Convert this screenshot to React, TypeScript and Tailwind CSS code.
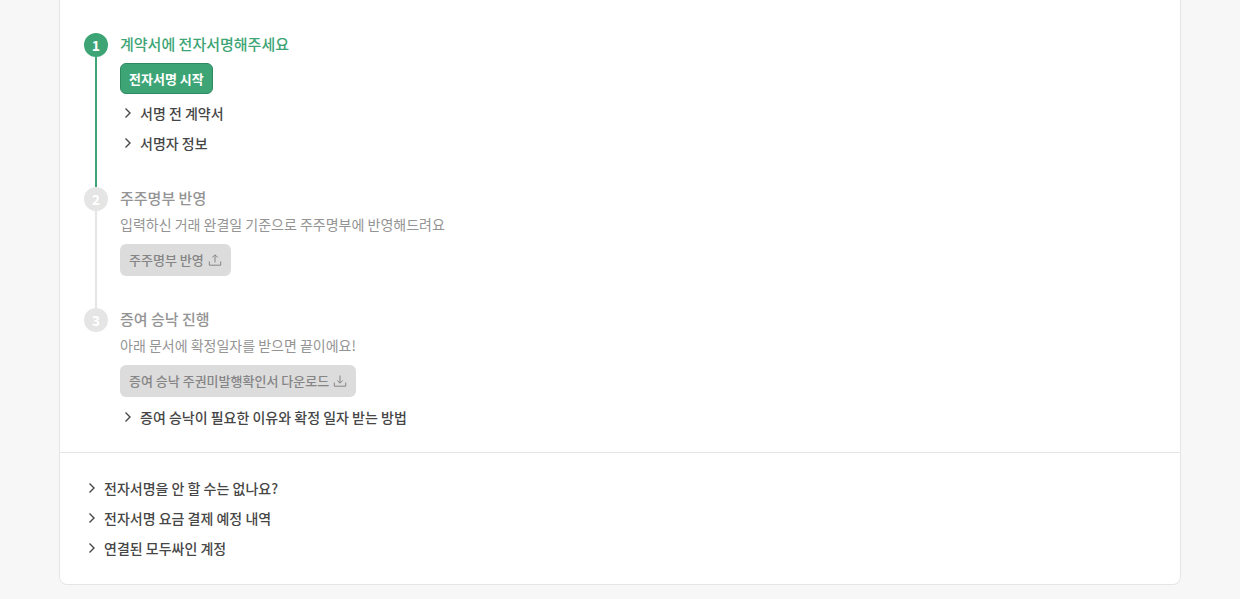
import type { ReactNode } from 'react';

type Status = 'active' | 'pending';

function ChevronIcon() {
  return (
    <svg className="size-4 shrink-0" viewBox="0 0 16 16" fill="none" stroke="currentColor" strokeWidth="1.4" aria-hidden="true">
      <path d="M5.5 3.6 10 8l-4.5 4.4" />
    </svg>
  );
}

function UploadIcon() {
  return (
    <svg className="size-4" viewBox="0 0 16 16" fill="none" stroke="currentColor" aria-hidden="true">
      <path d="M8 10.5V3M5.3 5.5 8 2.8l2.7 2.7M2.3 9.5v3.7h11.4V9.5" />
    </svg>
  );
}

function DownloadIcon() {
  return (
    <svg className="size-4" viewBox="0 0 16 16" fill="none" stroke="currentColor" aria-hidden="true">
      <path d="M8 2.5V10M5.3 7.5 8 10.2l2.7-2.7M2.3 9.5v3.7h11.4V9.5" />
    </svg>
  );
}

function Toggle({ children }: { children: ReactNode }) {
  return (
    <button
      type="button"
      aria-expanded="false"
      className="flex items-center gap-1 text-sm leading-[22px] font-medium text-[#464646] cursor-pointer"
    >
      <ChevronIcon />
      {children}
    </button>
  );
}

function DisabledButton({ children }: { children: ReactNode }) {
  return (
    <button
      type="button"
      disabled
      className="mt-[9px] flex h-8 items-center gap-[3px] rounded-md bg-[#dcdcdc] pr-2 pl-[9px] text-[13px] font-medium text-[#858585]"
    >
      {children}
    </button>
  );
}

interface StepProps {
  number: number;
  title: string;
  description?: string;
  status?: Status;
  last?: boolean;
  children: ReactNode;
}

function Step({ number, title, description, status = 'pending', last = false, children }: StepProps) {
  const active = status === 'active';

  return (
    <li className="flex gap-3">
      <div className="flex flex-col items-center">
        <span
          className={`flex size-6 items-center justify-center rounded-full text-sm leading-6 font-bold text-white ${
            active ? 'bg-[#3da575]' : 'bg-[#e5e5e5]'
          }`}
        >
          {number}
        </span>
        {!last && <span className={`w-0.5 grow ${active ? 'bg-[#3da575]' : 'bg-[#e5e5e5]'}`} />}
      </div>
      <div className={`flex flex-col items-start ${last ? 'pb-6' : 'pb-8'}`}>
        <h2 className={`text-[15px] leading-[22px] font-medium ${active ? 'text-[#3da575]' : 'text-[#949494]'}`}>{title}</h2>
        {description && <p className="mt-[5px] text-sm leading-[21px] text-[#949494]">{description}</p>}
        {children}
      </div>
    </li>
  );
}

export default function App() {
  return (
    <div className="min-h-screen bg-[#f7f7f7] px-[59px] pb-3.5 font-['Noto_Sans_CJK_KR','Noto_Sans',sans-serif]">
      <main className="mx-auto max-w-[1122px] rounded-b-lg border-x border-b border-[#e5e5e5] bg-white">
        <ol className="px-6 pt-[33px]">
          <Step number={1} title="계약서에 전자서명해주세요" status="active">
            <button
              type="button"
              className="mt-2 flex h-[31px] items-center rounded-md border border-[#2f8a60] bg-[#3da575] px-2 text-[13px] font-bold text-white cursor-pointer"
            >
              전자서명 시작
            </button>
            <div className="mt-2 mb-px flex flex-col gap-2">
              <Toggle>서명 전 계약서</Toggle>
              <Toggle>서명자 정보</Toggle>
            </div>
          </Step>

          <Step number={2} title="주주명부 반영" description="입력하신 거래 완결일 기준으로 주주명부에 반영해드려요">
            <DisabledButton>
              주주명부 반영
              <UploadIcon />
            </DisabledButton>
          </Step>

          <Step number={3} title="증여 승낙 진행" description="아래 문서에 확정일자를 받으면 끝이에요!" last>
            <DisabledButton>
              증여 승낙 주권미발행확인서 다운로드
              <DownloadIcon />
            </DisabledButton>
            <div className="mt-[9px]">
              <Toggle>증여 승낙이 필요한 이유와 확정 일자 받는 방법</Toggle>
            </div>
          </Step>
        </ol>

        <section className="flex flex-col items-start gap-2 border-t border-[#e5e5e5] px-6 pt-6 pb-[25px]">
          <Toggle>전자서명을 안 할 수는 없나요?</Toggle>
          <Toggle>전자서명 요금 결제 예정 내역</Toggle>
          <Toggle>연결된 모두싸인 계정</Toggle>
        </section>
      </main>
    </div>
  );
}
